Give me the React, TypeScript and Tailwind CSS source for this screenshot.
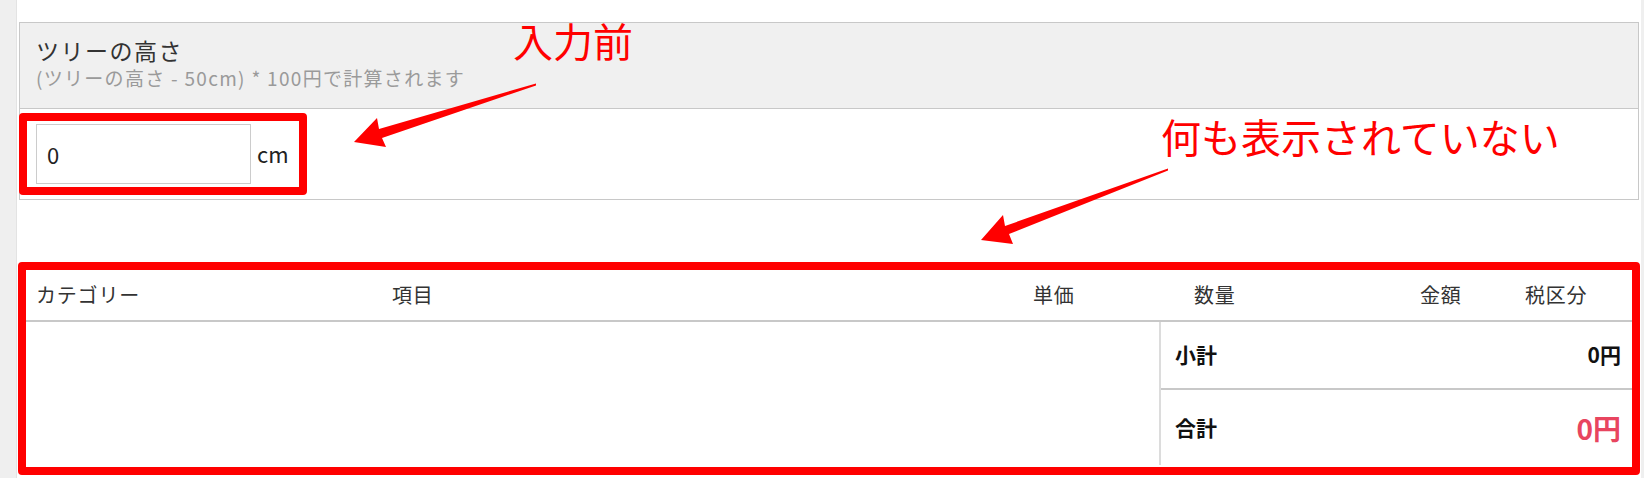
import React from "react";

const font = { fontFamily: '"Noto Sans CJK JP", "Noto Sans", sans-serif' };

export default function App() {
  return (
    <div
      className="relative flex h-[478px] w-[1645px] overflow-hidden bg-white text-[#333]"
      style={font}
    >
      {/* left gutter */}
      <div className="w-[17px] shrink-0 border-r border-[#e3e3e3] bg-[#efefef]" />

      {/* main column */}
      <div className="flex w-[1624px] shrink-0 flex-col pl-[2px] pr-[2px] pt-[22px]">
        {/* input panel */}
        <div className="border border-[#c8c8c8]">
          <div className="h-[86px] border-b border-[#c8c8c8] bg-[#f0f0f0] pl-[16px] pt-[12px]">
            <div className="text-[23px] leading-[30px] tracking-[1.5px] text-[#333]">ツリーの高さ</div>
            <div className="text-[19px] leading-[26px] tracking-[1.3px] text-[#9a9a9a]">
              (ツリーの高さ - 50cm) * 100円で計算されます
            </div>
          </div>
          <div className="relative flex h-[90px] items-start pl-[16px] pt-[15px]">
            <div className="flex h-[60px] w-[215px] items-center border border-[#cccccc] bg-white pl-[10px] text-[22px] text-[#222]">
              0
            </div>
            <div className="ml-[6px] mt-[14px] text-[22px] leading-[30px] text-[#222]">cm</div>
            {/* annotation box */}
            <div className="pointer-events-none absolute left-[-1px] top-[4px] h-[82px] w-[288px] rounded-[4px] border-[8px] border-[#ff0000]" />
          </div>
        </div>

        {/* table */}
        <div className="relative mt-[62px] ml-[-1px] mr-[-1px] h-[213px] p-[8px]">
          <div className="grid h-[52px] grid-cols-[366px_641px_161px_226px_105px_1fr] items-center border-b-[2px] border-[#c8c8c8] text-[20px] tracking-[0.8px] text-[#333]">
            <div className="pl-[10px]">カテゴリー</div>
            <div>項目</div>
            <div>単価</div>
            <div>数量</div>
            <div>金額</div>
            <div>税区分</div>
          </div>
          <div className="flex h-[143px]">
            <div className="w-[1133px] shrink-0" />
            <div className="flex flex-1 flex-col border-l-[2px] border-[#dcdcdc]">
              <div className="flex h-[68px] items-center justify-between border-b-[2px] border-[#c8c8c8] pl-[14px] pr-[11px] text-[21px] font-bold text-[#111]">
                <span>小計</span>
                <span>0円</span>
              </div>
              <div className="flex flex-1 items-center justify-between pl-[14px] pr-[11px] font-bold">
                <span className="text-[21px] text-[#111]">合計</span>
                <span className="text-[28px] text-[#e8455f]">0円</span>
              </div>
            </div>
          </div>
          {/* annotation box */}
          <div className="pointer-events-none absolute inset-0 rounded-[4px] border-[8px] border-[#ff0000]" />
        </div>
      </div>

      {/* right gutter */}
      <div className="w-[3px] shrink-0 bg-[#efefef]" />

      {/* annotations */}
      <div className="pointer-events-none absolute left-[513px] top-[16px] text-[40px] leading-[48px] text-[#ff0000]">
        入力前
      </div>
      <div className="pointer-events-none absolute left-[1161px] top-[112px] text-[40px] leading-[48px] text-[#ff0000]">
        何も表示されていない
      </div>
      <svg
        className="pointer-events-none absolute left-0 top-0"
        width="1645"
        height="478"
        viewBox="0 0 1645 478"
      >
        <polygon
          fill="#ff0000"
          points="536,83.5 379,129 377,118 354,142 386,147 382,138 536,85.5"
        />
        <polygon
          fill="#ff0000"
          points="1168,168.5 1005,226 1003,215 981,240 1013,244 1009,234 1168,170.5"
        />
      </svg>
    </div>
  );
}
